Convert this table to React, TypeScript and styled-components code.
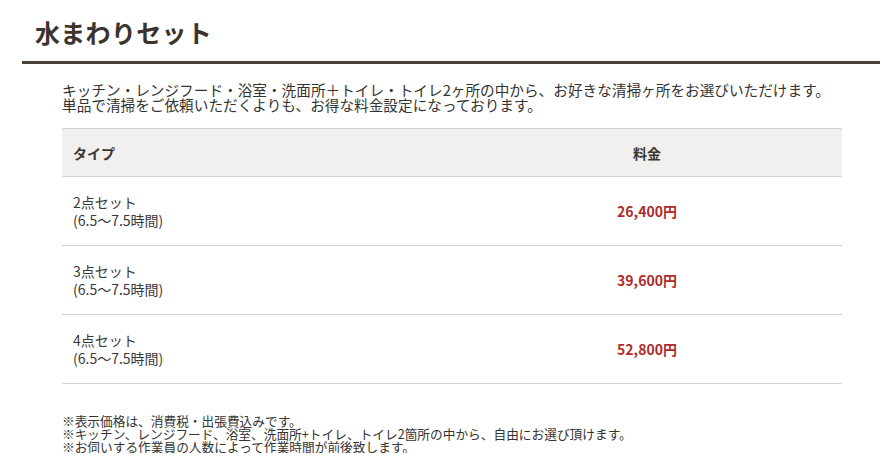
import React from "react"
import styled, { createGlobalStyle } from 'styled-components';

// Global ==================================================================

const GlobalStyle = createGlobalStyle`
    body {
        margin: 0;
        background: #fff;
        font-family: "Noto Sans CJK JP", "Noto Sans", sans-serif;
        color: #333;
    }
`;

// Styled Components ======================================================

let Section = styled.section`
    width: 858px;
    margin-left: 22px;
    box-sizing: border-box;
`;

let Heading = styled.h2`
    margin: 0;
    padding: 16px 0 13px 13px;
    font-size: 25px;
    line-height: 32px;
    font-weight: 700;
    letter-spacing: 0.3px;
    color: #3b342e;
    border-bottom: 3px solid #4b4037;
`;

let Body = styled.div`
    padding: 18px 0 0 40px;
`;

let Lead = styled.p`
    margin: 0 0 16px;
    font-size: 14.65px;
    line-height: 15px;
    color: #333;
    white-space: nowrap;
`;

let PriceTable = styled.table`
    width: 780px;
    border-collapse: collapse;
    font-size: 14px;
    border-top: 1px solid #d2d2d2;

    th, td {
        border-bottom: 1px solid #d2d2d2;
        padding: 0 11px;
        width: 50%;
    }
`;

let HeadCell = styled.th<{ $align?: string }>`
    height: 47px;
    background: #f1f0ee;
    text-align: ${p => p.$align || 'left'};
    font-weight: 700;
    color: #3a3631;
`;

let TypeCell = styled.td`
    height: 68px;
    line-height: 18px;
    color: #3a3a3a;
`;

let PriceCell = styled.td`
    text-align: center;
    font-weight: 700;
    color: #b02a2a;
`;

let Notes = styled.div`
    margin-top: 30px;
    font-size: 12.7px;
    line-height: 13px;
    color: #333;
`;

// =========================================================================

const sets = [
    { name: '2点セット', time: '(6.5〜7.5時間)', price: '26,400円' },
    { name: '3点セット', time: '(6.5〜7.5時間)', price: '39,600円' },
    { name: '4点セット', time: '(6.5〜7.5時間)', price: '52,800円' },
];

export default function App() {
    return (
        <>
            <GlobalStyle />
            <Section>
                <Heading>水まわりセット</Heading>
                <Body>
                    <Lead>
                        キッチン・レンジフード・浴室・洗面所＋トイレ・トイレ2ヶ所の中から、お好きな清掃ヶ所をお選びいただけます。<br />
                        単品で清掃をご依頼いただくよりも、お得な料金設定になっております。
                    </Lead>
                    <PriceTable>
                        <thead>
                            <tr>
                                <HeadCell>タイプ</HeadCell>
                                <HeadCell $align="center">料金</HeadCell>
                            </tr>
                        </thead>
                        <tbody>
                            {sets.map(s => (
                                <tr key={s.name}>
                                    <TypeCell>{s.name}<br />{s.time}</TypeCell>
                                    <PriceCell>{s.price}</PriceCell>
                                </tr>
                            ))}
                        </tbody>
                    </PriceTable>
                    <Notes>
                        ※表示価格は、消費税・出張費込みです。<br />
                        ※キッチン、レンジフード、浴室、洗面所+トイレ、トイレ2箇所の中から、自由にお選び頂けます。<br />
                        ※お伺いする作業員の人数によって作業時間が前後致します。
                    </Notes>
                </Body>
            </Section>
        </>
    );
}
